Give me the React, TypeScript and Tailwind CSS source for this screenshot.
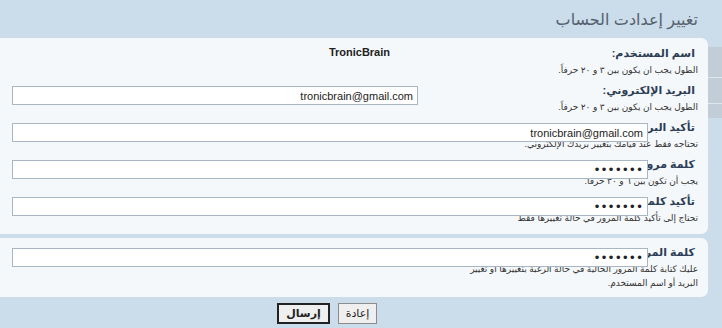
import React from "react";

type Row = {
  label: string;
  explain: React.ReactNode;
  kind: "text" | "email-short" | "email" | "password";
};

const rows: Row[] = [
  { label: "اسم المستخدم:", explain: "الطول يجب ان يكون بين ٣ و ٢٠ حرفاً.", kind: "text" },
  { label: "البريد الإلكتروني:", explain: "الطول يجب ان يكون بين ٣ و ٢٠ حرفاً.", kind: "email-short" },
  { label: "تأكيد البريد الإلكتروني:", explain: "تحتاجه فقط عند قيامك بتغيير بريدك الإلكتروني.", kind: "email" },
  { label: "كلمة مرور جديدة:", explain: "يجب أن تكون بين ٦ و ٣٠ حرفاً.", kind: "password" },
  { label: "تأكيد كلمة المرور:", explain: "تحتاج إلى تأكيد كلمة المرور في حالة تغييرها فقط", kind: "password" },
];

const inputCls = "h-[19px] border border-[#a9b6c4] bg-white px-[4px] text-[#222] outline-none";

function Field({ kind }: { kind: Row["kind"] }) {
  if (kind === "text") {
    return (
      <div className="[grid-area:1/1] justify-self-end ml-[12px] w-[378px] -mt-[5px] text-right font-bold text-[11px] leading-[16px] text-[#222]">
        TronicBrain
      </div>
    );
  }
  const wide = kind !== "email-short";
  const pw = kind === "password";
  return (
    <input
      dir="rtl"
      type={pw ? "password" : "text"}
      defaultValue={pw ? "1234567" : "tronicbrain@gmail.com"}
      className={`[grid-area:1/1] justify-self-end ml-[12px] ${wide ? "w-[636px]" : "w-[406px]"} ${
        pw ? "text-[12px] font-['DejaVu_Sans',sans-serif]" : "text-[11px]"
      } ${inputCls}`}
    />
  );
}

function Label({ label, explain }: { label: string; explain: React.ReactNode }) {
  return (
    <div className="[grid-area:1/1] justify-self-start pr-[10px] -mt-[4px] whitespace-nowrap">
      <div className="text-[11px] leading-[16px] font-bold text-[#2c3e55]">&nbsp;{label}</div>
      <div className="mt-[2px] text-[9px] leading-[14px] text-[#333]">{explain}</div>
    </div>
  );
}

function FormRow({ row }: { row: Row }) {
  return (
    <div className="grid h-[37px]">
      <Label label={row.label} explain={row.explain} />
      <Field kind={row.kind} />
    </div>
  );
}

export default function App() {
  return (
    <div
      dir="rtl"
      className="w-[722px] h-[328px] overflow-hidden bg-[#cbdcea] font-['Liberation_Sans','DejaVu_Sans',sans-serif]"
    >
      <div className="h-[38px] pr-[24px] pt-[10px] text-[16px] leading-[20px] text-[#55616d]">
        تغيير إعدادت الحساب
      </div>

      <div className="flex">
        {/* side strip on the right edge */}
        <div className="w-[14px] shrink-0 pt-[9px]">
          <div className="h-[31px] bg-[#c3cdd7] border-b border-[#dfe6ec]" />
          <div className="h-[26px] bg-[#c3cdd7] border-b border-[#dfe6ec]" />
          <div className="h-[14px] bg-[#c3cdd7]" />
        </div>

        <div className="w-[708px]">
          <div className="rounded-r-[7px] bg-[#f5f8fa] pt-[11px]">
            {rows.map((r, i) => (
              <FormRow key={i} row={r} />
            ))}
          </div>

          <div className="mt-[4px] h-[59px] rounded-r-[7px] bg-[#f5f8fa] pt-[10px]">
            <div className="grid">
              <Label
                label="كلمة المرور الحالية:"
                explain={
                  <>
                    عليك كتابة كلمة المرور الحالية في حالة الرغبة بتغييرها أو تغيير
                    <br />
                    البريد أو اسم المستخدم.
                  </>
                }
              />
              <Field kind="password" />
            </div>
          </div>

          <div className="flex justify-center gap-[8px] pt-[6px] pr-[54px]">
            <button className="h-[21px] w-[39px] border border-[#8c8c8c] bg-[#efefef] text-[11px] text-[#222]">
              إعادة
            </button>
            <button className="h-[21px] w-[53px] border-2 border-[#222] bg-[#efefef] text-[11px] font-bold text-[#222]">
              إرسال
            </button>
          </div>
        </div>
      </div>
    </div>
  );
}
